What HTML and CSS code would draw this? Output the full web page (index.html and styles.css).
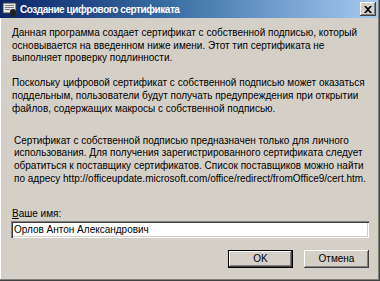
FILE: index.html
```html
<!DOCTYPE html>
<html>
<head>
<meta charset="utf-8">
<link rel="stylesheet" href="styles.css">
</head>
<body>
<div class="window">
  <div class="titlebar">
    <svg class="ticon" width="16" height="16" viewBox="0 0 16 16">
      <rect x="1" y="2" width="13" height="10" fill="#e8e8e8" stroke="#404040" stroke-width="1"/>
      <rect x="3" y="4" width="9" height="1" fill="#808080"/>
      <rect x="3" y="6" width="9" height="1" fill="#808080"/>
      <rect x="3" y="8" width="5" height="1" fill="#808080"/>
      <circle cx="11" cy="11" r="3" fill="#202020"/>
      <path d="M9 13 L8 16 L10 15 L11 16 L11 13Z" fill="#202020"/>
      <path d="M12 13 L12 16 L13 15 L14 16 L13 13Z" fill="#202020"/>
    </svg>
    <span class="ttext">Создание цифрового сертификата</span>
    <button class="close" aria-label="Закрыть">
      <svg width="8" height="7" viewBox="0 0 8 7"><path d="M0 0h2l2 2 2-2h2L5 3.5 8 7H6L4 5 2 7H0l3-3.5Z" fill="#000"/></svg>
    </button>
  </div>
  <div class="content">
    <p class="p1">Данная программа создает сертификат с собственной подписью, который<br>основывается на введенном ниже имени. Этот тип сертификата не<br>выполняет проверку подлинности.</p>
    <p class="p2">Поскольку цифровой сертификат с собственной подписью может оказаться<br>поддельным, пользователи будут получать предупреждения при открытии<br>файлов, содержащих макросы с собственной подписью.</p>
    <p class="p3">Сертификат с собственной подписью предназначен только для личного<br>использования. Для получения зарегистрированного сертификата следует<br>обратиться к поставщику сертификатов. Список поставщиков можно найти<br>по адресу http://officeupdate.microsoft.com/office/redirect/fromOffice9/cert.htm.</p>
    <label class="lbl" for="name"><u>В</u>аше имя:</label>
    <div class="field"><input id="name" value="Орлов Антон Александрович"></div>
    <div class="buttons">
      <button class="btn default">OK</button>
      <button class="btn">Отмена</button>
    </div>
  </div>
</div>
</body>
</html>
```
FILE: styles.css
```css
html, body {
  margin: 0;
  padding: 0;
  background: #d4d0c8;
}
.window {
  width: 380px;
  height: 281px;
  box-sizing: border-box;
  background: #d4d0c8;
  border-right: 1px solid #404040;
  border-bottom: 1px solid #404040;
  box-shadow: inset -1px -1px 0 #808080, inset 1px 0 0 #ffffff;
  font-family: "Liberation Sans", Arial, sans-serif;
  font-size: 10px;
  color: #000;
  display: flex;
  flex-direction: column;
  overflow: hidden;
}
.titlebar {
  flex: none;
  height: 18px;
  margin-right: 1px;
  background: linear-gradient(to right, #0a246a 0%, #3a6ea5 45%, #a6caf0 100%);
  display: flex;
  align-items: center;
  padding-left: 2px;
  padding-right: 2px;
}
.ticon {
  flex: none;
  margin-right: 2px;
}
.ttext {
  flex: 1;
  color: #fff;
  font-weight: bold;
  font-size: 10px;
  letter-spacing: -0.45px;
  font-family: "Liberation Sans", Arial, sans-serif;
  white-space: nowrap;
}
.close {
  flex: none;
  width: 16px;
  height: 14px;
  padding: 0;
  background: #d4d0c8;
  border: none;
  box-shadow: inset -1px -1px 0 #404040, inset 1px 1px 0 #ffffff, inset -2px -2px 0 #808080;
  display: flex;
  align-items: center;
  justify-content: center;
}
.content {
  flex: 1;
  padding: 9px 10px 0 12px;
  display: flex;
  flex-direction: column;
}
p {
  margin: 0;
  line-height: 12.7px;
  white-space: nowrap;
}
.p2 { margin-top: 12px; }
.p3 { margin-top: 19.5px; padding-left: 2px; }
.lbl {
  margin-top: 21px;
  line-height: 13px;
}
.field {
  margin-top: 1.5px;
  margin-left: -1px;
}
.field input {
  display: block;
  box-sizing: border-box;
  width: 358px;
  height: 17px;
  margin: 0;
  padding: 0 3px;
  border: none;
  background: #fff;
  box-shadow: inset 1px 1px 0 #808080, inset 2px 2px 0 #404040, inset -1px -1px 0 #ffffff, inset -2px -2px 0 #d4d0c8;
  font-family: "Liberation Sans", Arial, sans-serif;
  font-size: 10px;
  color: #000;
}
.buttons {
  display: flex;
  justify-content: flex-end;
  gap: 11px;
  margin-top: 11.5px;
}
.btn {
  width: 65px;
  height: 18px;
  padding: 0;
  background: #d4d0c8;
  border: none;
  box-shadow: inset -1px -1px 0 #404040, inset 1px 1px 0 #ffffff, inset -2px -2px 0 #808080;
  font-family: "Liberation Sans", Arial, sans-serif;
  font-size: 10px;
  color: #000;
}
.btn.default {
  box-shadow: inset 0 0 0 1px #000, inset -2px -2px 0 #404040, inset 2px 2px 0 #ffffff, inset -3px -3px 0 #808080;
}
```
